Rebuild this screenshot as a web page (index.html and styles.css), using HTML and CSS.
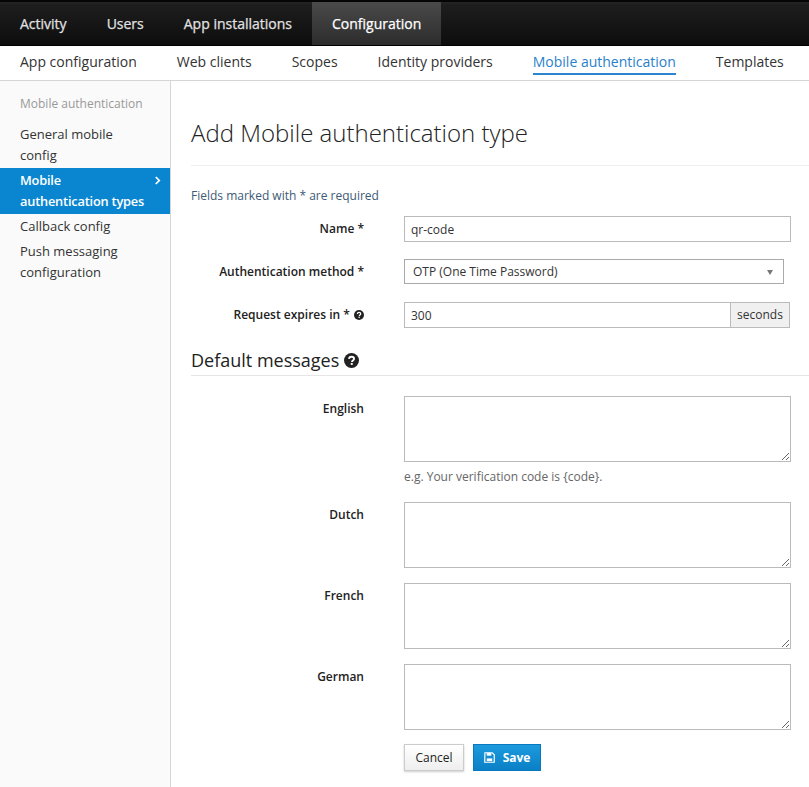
FILE: index.html
```html
<!DOCTYPE html>
<html lang="en">
<head>
<meta charset="utf-8">
<title>Add Mobile authentication type</title>
<link rel="stylesheet" href="styles.css">
</head>
<body>
<nav class="topbar">
  <a class="top-item">Activity</a>
  <a class="top-item">Users</a>
  <a class="top-item">App installations</a>
  <a class="top-item active">Configuration</a>
</nav>
<nav class="subnav">
  <a class="sub-item">App configuration</a>
  <a class="sub-item">Web clients</a>
  <a class="sub-item">Scopes</a>
  <a class="sub-item">Identity providers</a>
  <a class="sub-item active">Mobile authentication</a>
  <a class="sub-item">Templates</a>
</nav>
<div class="shell">
  <aside class="sidebar">
    <div class="side-title">Mobile authentication</div>
    <a class="side-item">General mobile config</a>
    <a class="side-item active">Mobile authentication types
      <svg class="chev" viewBox="0 0 8 10" width="7" height="9"><path d="M2 1l4 4-4 4" fill="none" stroke="#fff" stroke-width="2"/></svg>
    </a>
    <a class="side-item">Callback config</a>
    <a class="side-item">Push messaging configuration</a>
  </aside>
  <main class="main">
    <h1 class="page-title">Add Mobile authentication type</h1>
    <p class="req-note">Fields marked with * are required</p>
    <form class="form">
      <div class="row">
        <label class="label">Name *</label>
        <input class="input" type="text" value="qr-code">
      </div>
      <div class="row row-method">
        <label class="label">Authentication method *</label>
        <div class="select">OTP (One Time Password)<span class="caret"></span></div>
      </div>
      <div class="row row-expires">
        <label class="label">Request expires in *
          <svg class="help" viewBox="0 0 24 24" width="10" height="10"><circle cx="12" cy="12" r="12" fill="#222"/><path d="M8 9.500c.2-2.400 1.900-3.600 4.100-3.600 2.300 0 4 1.300 4 3.300 0 2.900-3.400 2.800-3.400 5.300" fill="none" stroke="#fff" stroke-width="3"/><rect x="10.800" y="16" width="3.200" height="3" fill="#fff"/></svg>
        </label>
        <div class="input-group">
          <input class="input grouped" type="text" value="300">
          <span class="addon">seconds</span>
        </div>
      </div>
      <h2 class="section-title">Default messages
        <svg class="help-lg" viewBox="0 0 24 24" width="15" height="15"><circle cx="12" cy="12" r="12" fill="#222"/><path d="M8 9.500c.2-2.400 1.900-3.600 4.100-3.600 2.300 0 4 1.300 4 3.300 0 2.900-3.400 2.800-3.400 5.300" fill="none" stroke="#fff" stroke-width="3"/><rect x="10.800" y="16" width="3.200" height="3" fill="#fff"/></svg>
      </h2>
      <div class="row row-first">
        <label class="label">English</label>
        <div class="field">
          <textarea class="area"></textarea>
          <p class="hint">e.g. Your verification code is {code}.</p>
        </div>
      </div>
      <div class="row row-after-hint">
        <label class="label">Dutch</label>
        <div class="field"><textarea class="area"></textarea></div>
      </div>
      <div class="row row-area">
        <label class="label">French</label>
        <div class="field"><textarea class="area"></textarea></div>
      </div>
      <div class="row row-area">
        <label class="label">German</label>
        <div class="field"><textarea class="area"></textarea></div>
      </div>
      <div class="actions">
        <button class="btn btn-default" type="button">Cancel</button>
        <button class="btn btn-primary" type="button">
          <svg viewBox="0 0 12 12" width="11" height="11"><path d="M1 .8h8L11.200 3v8.200H.8z" fill="none" stroke="#fff" stroke-width="1.300"/><rect x="3" y="1" width="5" height="3" fill="#fff"/><rect x="3" y="7" width="6" height="3" fill="#fff"/></svg>
          Save
        </button>
      </div>
    </form>
  </main>
</div>
</body>
</html>
```
FILE: styles.css
```css
* { box-sizing: border-box; }
html, body { margin: 0; padding: 0; height: 100%; overflow: hidden; }
body { font-family: "Open Sans", sans-serif; color: #222; background: #fff; font-size: 12px; }

.topbar {
  display: flex;
  height: 46px;
  background: linear-gradient(#222 0, #222 2px, #1e1e1e 2px, #0d0d0d 100%);
  border-top: 2px solid #050505;
  border-bottom: 1px solid #000;
}
.top-item {
  padding: 0 20px;
  line-height: 43px;
  font-size: 14px;
  font-weight: 400;
  color: #e2e2e2;
  -webkit-text-stroke: .25px currentColor;
}
.top-item.active {
  color: #fff;
  background: linear-gradient(#4a4a4a, #2c2c2c);
}

.subnav {
  display: flex;
  gap: 40px;
  height: 35px;
  padding: 0 20px;
  background: #fff;
  border-bottom: 1px solid #d5d5d5;
}
.sub-item {
  font-size: 14px;
  line-height: 32px;
  height: 29px;
  color: #333;
}
.sub-item.active {
  color: #2a7fcb;
  border-bottom: 2px solid #2a85d0;
}

.shell { display: flex; height: 706px; }
.sidebar {
  width: 171px;
  flex: none;
  padding-top: 12px;
  background: #fafafa;
  border-right: 1px solid #d5d5d5;
}
.side-title {
  padding: 0 20px;
  margin-bottom: 8px;
  line-height: 21px;
  font-size: 12px;
  color: #999;
}
.side-item {
  display: block;
  position: relative;
  padding: 2px 20px;
  font-size: 13px;
  line-height: 21px;
  color: #333;
}
.side-item.active {
  background: #0a86d0;
  color: #fff;
  font-size: 12.800px;
  font-weight: 600;
  padding-right: 20px;
  letter-spacing: -.2px;
}
.chev { position: absolute; top: 8px; right: 9px; }

.main { flex: 1; min-width: 0; padding-left: 20px; }
.page-title {
  margin: 35px 0 0;
  padding-bottom: 16px;
  font-size: 24px;
  line-height: 33px;
  font-weight: 300;
  color: #222;
  border-bottom: 1px solid #eee;
}
.req-note {
  margin: 21px 0 0;
  font-size: 12px;
  line-height: 18px;
  color: #3d5a75;
}
.form { margin-top: 11px; }
.row { display: flex; align-items: flex-start; }
.label {
  width: 173px;
  flex: none;
  margin-right: 40px;
  text-align: right;
  font-size: 12px;
  font-weight: 600;
  line-height: 26px;
  color: #222;
}
.input {
  width: 387px;
  height: 26px;
  padding: 0 6px;
  border: 1px solid #bbb;
  background: #fff;
  font: 12px "Open Sans", sans-serif;
  color: #333;
  outline: none;
}
.row-method { margin-top: 17px; }
.row-expires { margin-top: 17px; }
.select {
  position: relative;
  width: 380px;
  height: 25px;
  padding: 0 8px;
  border: 1px solid #aaa;
  line-height: 23px;
  font-size: 12px;
  color: #333;
  background: #fff;
}
.caret {
  position: absolute;
  top: 10px;
  right: 10px;
  border-left: 3px solid transparent;
  border-right: 3px solid transparent;
  border-top: 5px solid #777;
}
.input-group { display: flex; width: 386px; }
.grouped { flex: 1; width: auto; min-width: 0; border-right: 0; }
.addon {
  width: 60px;
  height: 26px;
  border: 1px solid #bbb;
  background: #f0f0f0;
  text-align: center;
  line-height: 23px;
  font-size: 12px;
  color: #333;
}
.help { vertical-align: -1px; margin-left: 1px; }
.section-title {
  margin: 20px 0 0;
  padding-bottom: 2px;
  font-size: 18px;
  line-height: 25px;
  font-weight: 400;
  color: #222;
  border-bottom: 1px solid #e5e5e5;
}
.help-lg { vertical-align: -1px; }
.row-first { margin-top: 20px; }
.row-after-hint { margin-top: 16px; }
.row-area { margin-top: 15px; }
.area {
  display: block;
  width: 387px;
  height: 66px;
  border: 1px solid #bbb;
  background: #fff;
  resize: both;
  outline: none;
}
.hint {
  margin: 6px 0 0;
  font-size: 12px;
  line-height: 18px;
  color: #666;
}
.actions {
  display: flex;
  gap: 9px;
  margin: 14px 0 0 213px;
}
.btn {
  height: 27px;
  padding: 0;
  font: 12px "Open Sans", sans-serif;
}
.btn-default {
  width: 60px;
  color: #222;
  border: 1px solid #ccc;
  background: linear-gradient(#fff, #eee);
  box-shadow: 0 1px 2px rgba(0,0,0,.2);
}
.btn-primary {
  width: 68px;
  color: #fff;
  font-weight: 700;
  border: 1px solid #0a78bd;
  background: linear-gradient(#1d9ade, #0a80c6);
}
.btn-primary svg { vertical-align: -1px; margin-right: 5px; }
```
